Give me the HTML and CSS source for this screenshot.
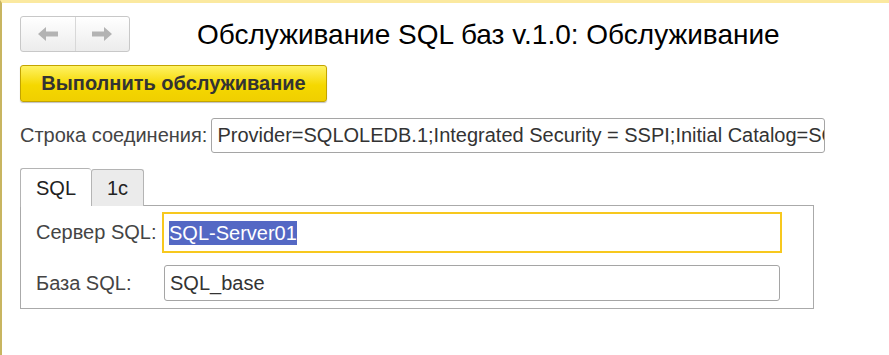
FILE: index.html
```html
<!DOCTYPE html>
<html lang="ru">
<head>
<meta charset="utf-8">
<link rel="stylesheet" href="styles.css">
</head>
<body>
<div class="frame">
  <div class="header">
    <div class="nav">
      <span class="nav-btn">
        <svg width="22" height="16" viewBox="0 0 22 16"><path d="M1 8 L9 1 L9 5.5 L21 5.5 L21 10.5 L9 10.5 L9 15 Z" fill="#b3b3b3"/></svg>
      </span>
      <span class="nav-btn">
        <svg width="22" height="16" viewBox="0 0 22 16"><path d="M21 8 L13 1 L13 5.5 L1 5.5 L1 10.5 L13 10.5 L13 15 Z" fill="#b3b3b3"/></svg>
      </span>
    </div>
    <div class="title">Обслуживание SQL баз v.1.0: Обслуживание</div>
  </div>
  <div class="actions">
    <button class="primary">Выполнить обслуживание</button>
  </div>
  <div class="conn-row">
    <span class="label">Строка соединения:</span>
    <div class="input conn">Provider=SQLOLEDB.1;Integrated Security = SSPI;Initial Catalog=SQL_base;Data Source=SQL-Server01</div>
  </div>
  <div class="tabs">
    <span class="tab active">SQL</span>
    <span class="tab">1c</span>
  </div>
  <div class="panel">
    <div class="field-row">
      <span class="label fl">Сервер SQL:</span>
      <div class="input focused"><span class="sel">SQL-Server01</span></div>
    </div>
    <div class="field-row">
      <span class="label fl">База SQL:</span>
      <div class="input base">SQL_base</div>
    </div>
  </div>
</div>
</body>
</html>
```

FILE: styles.css
```css
html, body {
  margin: 0;
  padding: 0;
  background: #fff;
}
body {
  font-family: "Liberation Sans", Arial, sans-serif;
  width: 889px;
  height: 355px;
  overflow: hidden;
}
.frame {
  box-sizing: border-box;
  height: 355px;
  border-top: 3px solid #fbe9a0;
  border-left: 2px solid #c8b560;
  padding: 13px 0 0 18px;
}
.header {
  display: flex;
  align-items: center;
  height: 36px;
}
.nav {
  display: flex;
  box-sizing: border-box;
  width: 110px;
  height: 36px;
  border: 1px solid #c8c8c8;
  border-radius: 3px;
  background: linear-gradient(#ffffff, #ececec);
}
.nav-btn {
  flex: 1;
  display: flex;
  align-items: center;
  justify-content: center;
}
.nav-btn + .nav-btn {
  border-left: 1px solid #d8d8d8;
}
.title {
  margin-left: 67px;
  font-size: 28px;
  color: #000;
  padding-top: 2px;
}
.actions {
  margin-top: 13px;
}
.primary {
  box-sizing: border-box;
  width: 307px;
  height: 37px;
  border: 1px solid #c3a400;
  border-radius: 3px;
  background: linear-gradient(#fff263, #f5d800 55%, #f0cf00);
  box-shadow: 0 1px 1px rgba(0,0,0,0.25);
  font-family: "Liberation Sans", Arial, sans-serif;
  font-weight: bold;
  font-size: 20px;
  color: #333;
  padding: 0;
}
.conn-row {
  display: flex;
  align-items: center;
  margin-top: 16px;
}
.label {
  font-size: 20px;
  color: #444;
}
.input {
  box-sizing: border-box;
  border: 1px solid #a5a5a5;
  border-radius: 3px;
  font-size: 20px;
  color: #333;
  white-space: nowrap;
  overflow: hidden;
  display: flex;
  align-items: center;
}
.conn {
  margin-left: 4px;
  flex: 0 0 614px;
  width: 614px;
  height: 35px;
  padding-left: 5px;
}
.tabs {
  display: flex;
  margin-top: 15px;
  height: 38px;
  position: relative;
  z-index: 1;
}
.tab {
  box-sizing: border-box;
  display: flex;
  align-items: center;
  justify-content: center;
  border: 1px solid #b4b4b4;
  border-bottom: none;
  font-size: 20px;
  color: #222;
  background: #ebebeb;
  width: 53px;
  margin-top: 1px;
  border-radius: 3px 3px 0 0;
}
.tab.active {
  width: 71px;
  background: #fff;
  margin-top: 0;
  height: 39px;
  border-right: none;
}
.panel {
  box-sizing: border-box;
  width: 794px;
  height: 104px;
  border: 1px solid #aaaaaa;
  margin-top: -1px;
  padding: 6px 0 0 15px;
}
.field-row {
  display: flex;
  align-items: center;
}
.field-row + .field-row {
  margin-top: 12px;
}
.fl {
  width: 126px;
}
.focused {
  width: 620px;
  height: 41px;
  border: 2px solid #f7c81e;
  border-radius: 0;
  padding-left: 5px;
}
.sel {
  background: #5468c4;
  color: #fff;
  line-height: 24px;
}
.base {
  margin-left: 2px;
  width: 616px;
  height: 36px;
  padding-left: 5px;
}
```
